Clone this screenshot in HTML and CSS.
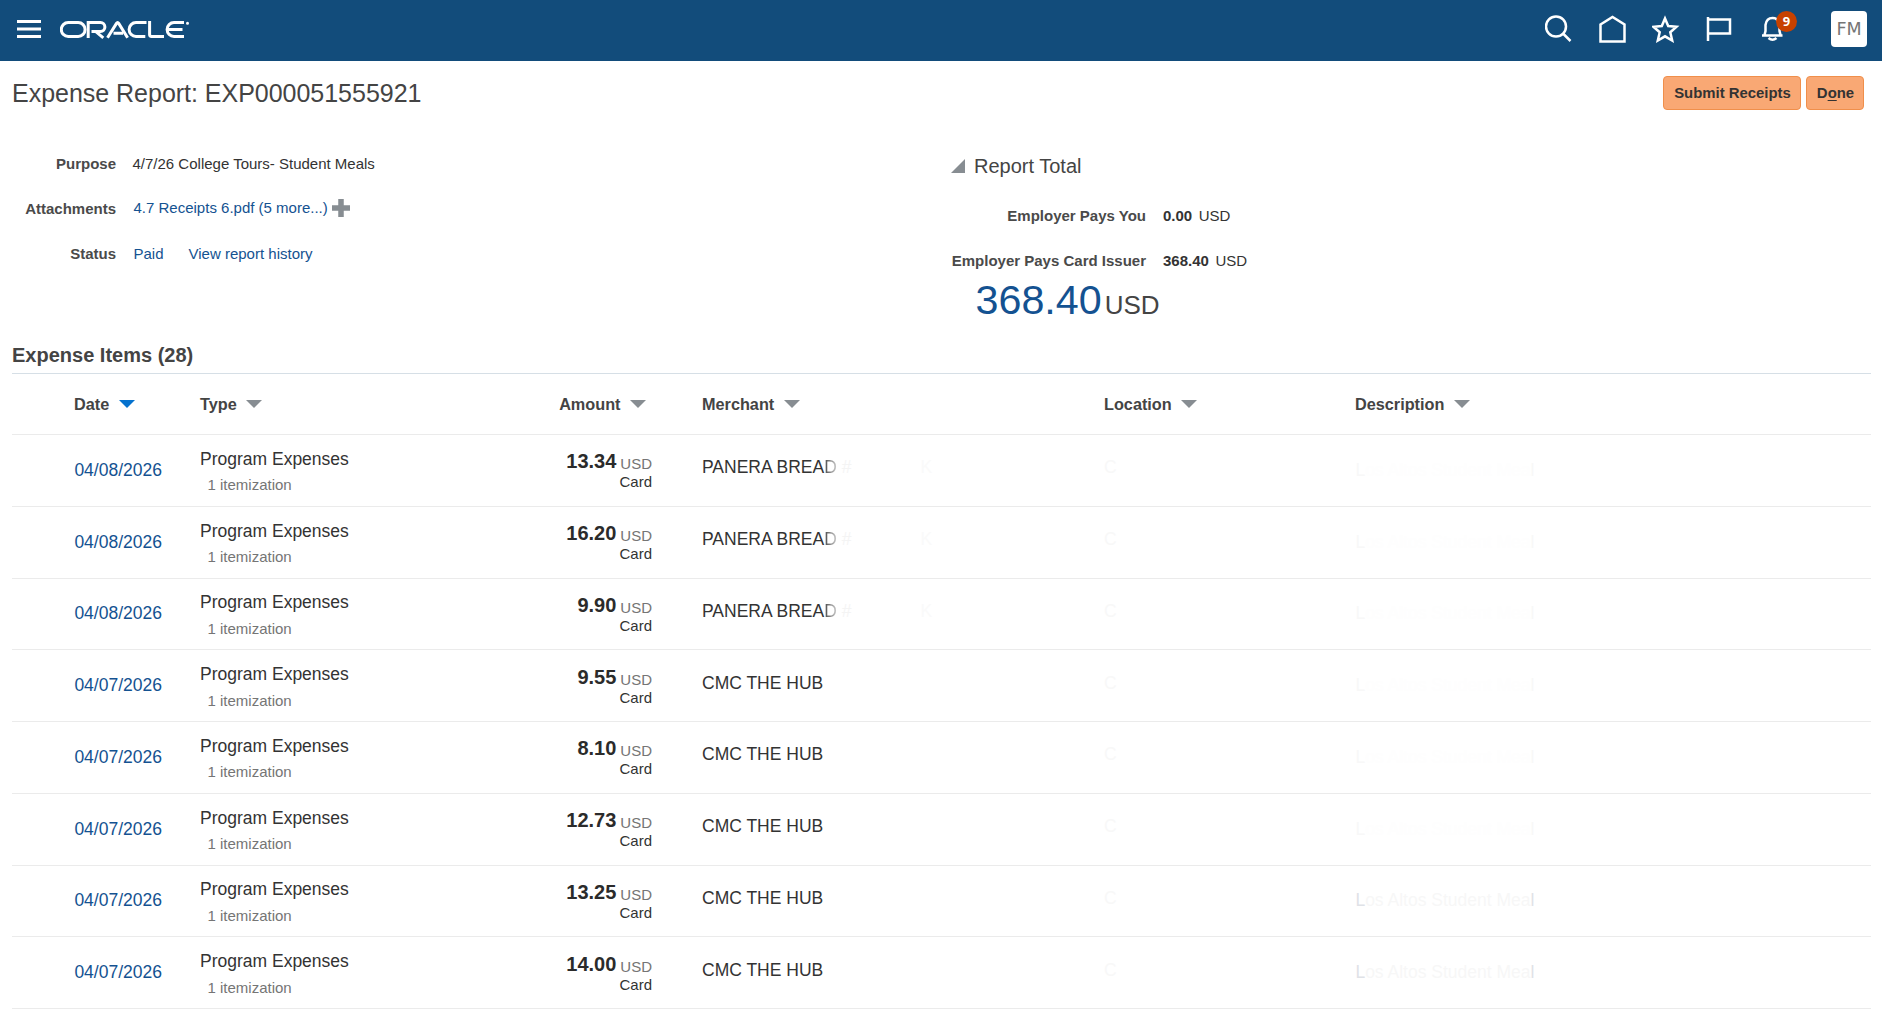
FILE: index.html
```html
<!DOCTYPE html>
<html lang="en">
<head>
<meta charset="utf-8">
<title>Expense Report</title>
<link rel="stylesheet" href="styles.css">
</head>
<body>
<header class="topbar">
  <svg class="menu" width="24" height="18" viewBox="0 0 24 18"><path d="M0 1.500h24M0 9h24M0 16.500h24" stroke="#fff" stroke-width="3"/></svg>
  <svg class="logo" width="130" height="18" viewBox="0 0 130 18" role="img" aria-label="Oracle" fill="none" stroke="#fff" stroke-width="3">
    <path d="M8.200 1.600h10a6.900 6.900 0 0 1 0 13.800h-10a6.900 6.900 0 0 1 0-13.800z"/>
    <path d="M28.200 17V1.600h12.300a4.400 4.400 0 0 1 0 8.800H31.500M35.500 10.400l7.800 6.400"/>
    <path d="M47.500 16.800l9-14.400q1.100-1.700 2.200 0l8.900 14.400M53.500 12.200h9.500"/>
    <path d="M86.500 1.600h-10.500a6.900 6.900 0 0 0 0 13.800h9.300M89.600 0v13.500q0 1.900 1.900 1.900h12.500"/>
    <path d="M124 1.600h-10a6.900 6.900 0 0 0 0 13.800h10M108 8.500h14.500"/>
    <circle cx="127.500" cy="2.200" r=".8" stroke-width="1.400"/>
  </svg>
  <nav class="tools">
    <svg width="28" height="28" viewBox="0 0 28 28"><circle cx="11" cy="11.500" r="10" /><path d="M18 18.500l7.500 7.500"/></svg>
    <svg width="28" height="28" viewBox="0 0 28 28"><path d="M1.500 9.500L13.500 2 25.500 9.500V26.500H1.500z"/></svg>
    <svg width="28" height="28" viewBox="0 0 28 28"><path d="M13 3.500l3.200 7.500 8.300.8-6.200 5.500 1.900 8.200-7.200-4.200-7.200 4.200 1.900-8.200-6.200-5.500 8.300-.8z"/></svg>
    <svg width="28" height="28" viewBox="0 0 28 28"><path d="M2 2v24M2 4.500h22v14H2"/></svg>
    <div class="bell">
      <svg width="28" height="28" viewBox="0 0 28 28"><path d="M3 20.500h20.500M5.500 20l1-4V10q1-7 7-7t7 7v6l1 4M9.500 23q4 3.500 8 0"/></svg>
      <span class="badge">9</span>
    </div>
  </nav>
  <div class="avatar">FM</div>
</header>
<main>
  <section class="titlebar">
    <h1>Expense Report: EXP000051555921</h1>
    <div class="actions"><button>Submit Receipts</button><button class="done">D<u>o</u>ne</button></div>
  </section>
  <section class="summary">
    <div class="fields">
      <b>Purpose</b><span>4/7/26 College Tours- Student Meals</span>
      <b>Attachments</b><span class="attach"><a>4.7 Receipts 6.pdf (5 more...)</a><svg width="18" height="18" viewBox="0 0 18 18"><path d="M9 0v18M0 9h18" stroke="#878d92" stroke-width="5.500"/></svg></span>
      <b>Status</b><span class="status"><a>Paid</a><a>View report history</a></span>
    </div>
    <div class="totals">
      <h2><svg width="14" height="14" viewBox="0 0 14 14"><path d="M14 0v14H0z" fill="#878d92"/></svg>Report Total</h2>
      <div class="sums">
        <b>Employer Pays You</b><span><strong>0.00</strong>USD</span>
        <b>Employer Pays Card Issuer</b><span><strong>368.40</strong>USD</span>
      </div>
      <p class="grand">368.40<small>USD</small></p>
    </div>
  </section>
  <h3>Expense Items (28)</h3>
  <div class="table">
    <div class="head">
      <span>Date<i class="sorted"></i></span><span>Type<i></i></span><span class="num">Amount<i></i></span><span>Merchant<i></i></span><span>Location<i></i></span><span>Description<i></i></span>
    </div>
    <div id="rows"></div>
  </div>
</main>
<script src="rows.js"></script>
</body>
</html>
```
FILE: styles.css
```css
* { box-sizing: border-box; }
body { margin: 0; height: 1015px; overflow: hidden; background: #fff; color: #333; font: 15px/20px "Liberation Sans", Arial, sans-serif; }
h1, h2, h3, p { margin: 0; font-weight: normal; }
a { color: #145291; }

.topbar { height: 61px; background: #124c7b; display: flex; align-items: flex-start; padding: 0 15px 0 17px; }
.menu { margin-top: 20px; }
.logo { margin: 21px 0 0 19px; }
.tools { margin-left: auto; display: flex; gap: 25.5px; padding-top: 15px; }
.tools svg { display: block; fill: none; stroke: #fff; stroke-width: 2.5; }
.bell { position: relative; }
.badge { position: absolute; left: 17px; top: -4px; width: 21px; height: 21px; border-radius: 50%; background: #c74100; color: #fff; font: bold 13px/21px "Open Sans", sans-serif; text-align: center; }
.avatar { width: 36px; height: 36px; margin: 11px 0 0 44px; border-radius: 4px; background: #fff; color: #757575; font: 17.5px/36px "DejaVu Sans", sans-serif; text-align: center; }

.titlebar { display: flex; justify-content: space-between; height: 90px; padding: 15px 18px 0 12px; }
h1 { font-size: 25px; line-height: 34px; letter-spacing: -.02px; color: #444; }
.actions { display: flex; gap: 5px; }
button { width: 138px; height: 34px; padding: 0 0 0 1px; border: 1px solid #f08f4b; border-radius: 4px; background: #f9a874; color: #333; font: bold 14.9px "Liberation Sans", Arial, sans-serif; white-space: nowrap; }
.done { width: 58px; }
u { text-underline-offset: 2px; }

.summary { display: grid; grid-template-columns: 951px 1fr; height: 191px; }
.fields { display: grid; grid-template-columns: 116px 1fr; grid-auto-rows: 45px; column-gap: 16.5px; padding-top: 3px; }
.fields b, .sums b { text-align: right; color: #4a4a4a; }
.attach { display: flex; align-items: flex-start; gap: 4px; margin-top: -1px; padding-left: 1px; }
.attach svg { margin-top: 1px; }
.status { display: flex; gap: 25px; padding-left: 1px; }
h2 { display: flex; align-items: center; gap: 9px; padding-top: 1px; font-size: 20px; line-height: 28px; color: #444; }
.sums { display: grid; grid-template-columns: 195px 1fr; grid-auto-rows: 45px; column-gap: 17px; padding-top: 26px; }
.sums strong { margin-right: 6.5px; }
.grand { padding-left: 24.5px; margin-top: -19px; font-size: 41.25px; line-height: 46px; color: #145291; }
.grand small { margin-left: 3px; font-size: 26px; color: #444; }

h3 { margin: 0 11px 0 12px; height: 32px; font-size: 20px; line-height: 26px; font-weight: bold; color: #444; border-bottom: 1px solid #d6dfe6; }
.table { margin: 0 11px 0 12px; }
.head, .row { display: grid; grid-template-columns: 62px 126px 252px 250px 402px 251px 1fr; border-bottom: 1px solid #ebebeb; }
.head > :first-child, .row > :first-child { grid-column: 2; }
.head { height: 61px; padding-top: 20px; font-size: 16.25px; font-weight: bold; color: #444; }
.head i { display: inline-block; margin-left: 9.5px; border: 8px solid transparent; border-top-color: #878d92; border-bottom: 0; vertical-align: 2px; }
.head .sorted { border-top-color: #0572ce; }
.num { text-align: right; padding-right: 50px; }
.head .num { padding-right: 56px; }
.row { height: 71.75px; font-size: 17.5px; }
.date { padding: 24.8px 0 0 .4px; }
.type { padding-top: 13.8px; }
.type small { display: block; margin: 6.6px 0 0 7.5px; font-size: 15px; color: #757575; }
.row .num { padding-top: 14.4px; line-height: 24px; }
.num b { font-size: 20px; color: #2b2b2b; }
.num em { position: relative; top: 1px; margin-left: 4px; font-style: normal; font-size: 15px; color: #757575; }
.num small { display: block; margin-top: -2px; font-size: 15px; line-height: 18px; }
.merchant, .location { padding-top: 22.4px; white-space: pre; }
.fade { background: linear-gradient(90deg, #444, #d0d0d0); background-clip: text; color: transparent; }
.mark { color: #f4f4f4; }
.tail { margin-left: 69px; color: #fafafa; }
.location { color: #f8f8f8; }
.description { padding: 24.8px 0 0 .4px; color: #fefefe; }
.description.seen { color: #f7f7f7; }
.edge { color: #f8f8f8; }
.seen .edge { color: #dfe2e7; }
```
FILE: rows.js
```js
const items = [
  ["04/08/2026", "13.34", "PANERA BREAD"],
  ["04/08/2026", "16.20", "PANERA BREAD"],
  ["04/08/2026", "9.90", "PANERA BREAD"],
  ["04/07/2026", "9.55", "CMC THE HUB"],
  ["04/07/2026", "8.10", "CMC THE HUB"],
  ["04/07/2026", "12.73", "CMC THE HUB"],
  ["04/07/2026", "13.25", "CMC THE HUB"],
  ["04/07/2026", "14.00", "CMC THE HUB"],
];
document.getElementById("rows").innerHTML = items.map(([date, amount, merchant], i) => {
  const name = merchant.startsWith("PANERA")
    ? 'PANERA BREA<span class="fade">D</span><span class="mark"> #</span><span class="tail">K</span>'
    : merchant;
  return `<div class="row">
    <a class="date">${date}</a>
    <div class="type">Program Expenses<small>1 itemization</small></div>
    <div class="num"><b>${amount}</b><em>USD</em><small>Card</small></div>
    <div class="merchant">${name}</div>
    <div class="location">C</div>
    <div class="description${i > 5 ? " seen" : ""}"><span class="edge">L</span>os Altos Student Mea<span class="edge">l</span></div>
  </div>`;
}).join("");
```
